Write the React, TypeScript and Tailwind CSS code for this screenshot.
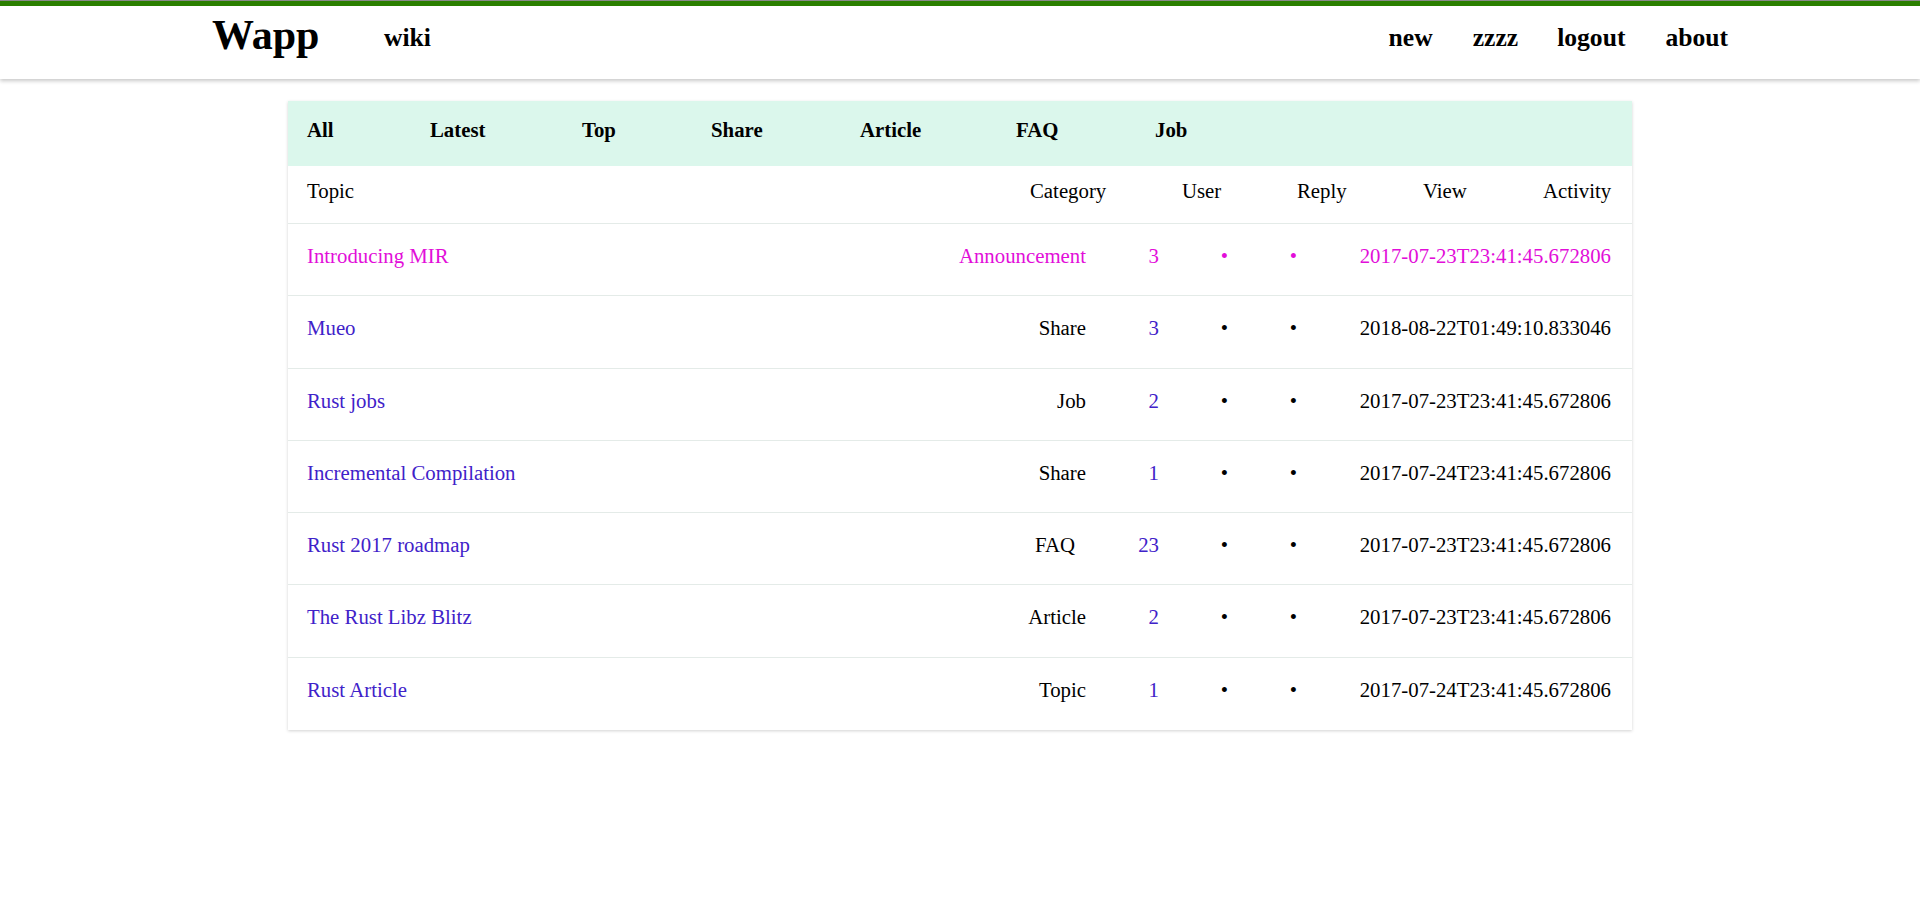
import React from "react";

const PINK = "text-[#e20ed9]";
const BLUE = "text-[#3f22c9]";

type Row = {
  title: string;
  cat: string;
  count: string;
  date: string;
  hot?: boolean;
  catPad?: boolean;
};

const rows: Row[] = [
  { title: "Introducing MIR", cat: "Announcement", count: "3", date: "2017-07-23T23:41:45.672806", hot: true },
  { title: "Mueo", cat: "Share", count: "3", date: "2018-08-22T01:49:10.833046" },
  { title: "Rust jobs", cat: "Job", count: "2", date: "2017-07-23T23:41:45.672806" },
  { title: "Incremental Compilation", cat: "Share", count: "1", date: "2017-07-24T23:41:45.672806" },
  { title: "Rust 2017 roadmap", cat: "FAQ", count: "23", date: "2017-07-23T23:41:45.672806", catPad: true },
  { title: "The Rust Libz Blitz", cat: "Article", count: "2", date: "2017-07-23T23:41:45.672806" },
  { title: "Rust Article", cat: "Topic", count: "1", date: "2017-07-24T23:41:45.672806" },
];

const tabs: { label: string; w: string }[] = [
  { label: "All", w: "w-[123px]" },
  { label: "Latest", w: "w-[152px]" },
  { label: "Top", w: "w-[129px]" },
  { label: "Share", w: "w-[149px]" },
  { label: "Article", w: "w-[156px]" },
  { label: "FAQ", w: "w-[139px]" },
  { label: "Job", w: "w-[60px]" },
];

export default function App() {
  return (
    <div className="min-h-screen bg-white text-black font-['Liberation_Serif','Times_New_Roman',serif]">
      {/* Header */}
      <div className="relative z-10 bg-white shadow-[0_2px_4px_rgba(0,0,0,0.22)]">
        <div className="h-[1px] bg-[#8a8a8a]" />
        <div className="h-[5px] bg-[#2b7f00]" />
        <div className="mx-auto flex h-[73px] w-[1536px] items-start">
          <a className="ml-[20px] mt-[8px] w-[172px] text-[42px] font-bold leading-[42px]">Wapp</a>
          <a className="mt-[19px] text-[25.6px] font-bold leading-[26px]">wiki</a>
          <div className="ml-auto mt-[19px] flex gap-[40px] text-[25.6px] font-bold leading-[26px]">
            <a>new</a>
            <a>zzzz</a>
            <a className="-ml-[1px]">logout</a>
            <a>about</a>
          </div>
        </div>
      </div>

      {/* Card */}
      <div className="mx-auto mt-[22px] w-[1344px] bg-white shadow-[0_1px_3px_rgba(0,0,0,0.18)]">
        <div className="flex h-[65px] items-start bg-[#dbf7ec] pl-[19px] pt-[17px] text-[20.8px] font-bold leading-[24px]">
          {tabs.map((t) => (
            <a key={t.label} className={t.w}>
              {t.label}
            </a>
          ))}
        </div>

        <div className="flex h-[58px] items-start border-b border-[#e4ebe8] pl-[19px] pr-[21px] pt-[13px] text-[20.8px] leading-[24px]">
          <div className="flex-1">Topic</div>
          <div className="w-[152px]">Category</div>
          <div className="w-[115px]">User</div>
          <div className="w-[126px]">Reply</div>
          <div className="w-[120px]">View</div>
          <div className="w-[68px] whitespace-nowrap">Activity</div>
        </div>

        {rows.map((r, i) => {
          const c = r.hot ? PINK : "";
          return (
            <div
              key={i}
              className={`flex h-[72.3px] items-start pl-[19px] pr-[21px] pt-[20px] text-[20.8px] leading-[24px] ${
                i < rows.length - 1 ? "border-b border-[#e4ebe8]" : ""
              }`}
            >
              <a className={`flex-1 ${r.hot ? PINK : BLUE}`}>{r.title}</a>
              <div className={`w-[200px] text-right ${c} ${r.catPad ? "pr-[11px]" : ""}`}>{r.cat}</div>
              <div className={`w-[76px] pr-[3px] text-right ${r.hot ? PINK : BLUE}`}>{r.count}</div>
              <div className={`w-[69px] pr-[3px] text-right ${c}`}>•</div>
              <div className={`w-[69px] pr-[3px] text-right ${c}`}>•</div>
              <div className={`w-[311px] whitespace-nowrap text-right ${c}`}>{r.date}</div>
            </div>
          );
        })}
      </div>
    </div>
  );
}
